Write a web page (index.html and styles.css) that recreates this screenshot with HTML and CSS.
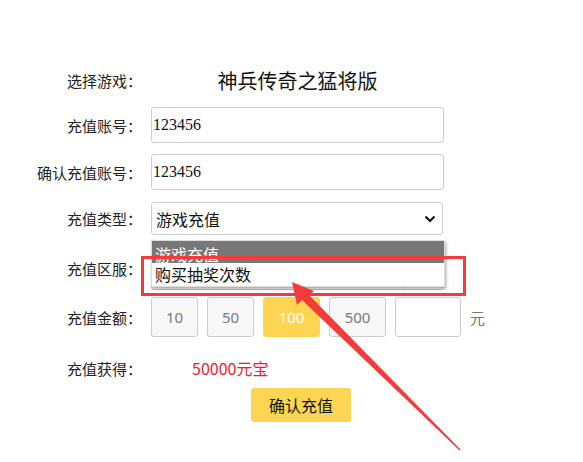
FILE: index.html
```html
<!DOCTYPE html>
<html lang="zh-CN">
<head>
  <meta charset="UTF-8" />
  <meta name="viewport" content="width=device-width, initial-scale=1" />
  <title>充值</title>
  <link rel="stylesheet" href="styles.css">
</head>
<body>
  <main class="pay">
    <div class="row row-game">
      <span class="label">选择游戏：</span>
      <span class="game-name">神兵传奇之猛将版</span>
    </div>
    <div class="row row-input">
      <span class="label">充值账号：</span>
      <input class="field" type="text" value="123456" />
    </div>
    <div class="row row-input gap-11">
      <span class="label">确认充值账号：</span>
      <input class="field" type="text" value="123456" />
    </div>
    <div class="row row-select">
      <span class="label">充值类型：</span>
      <div class="select">
        <span>游戏充值</span>
        <svg class="caret" width="12" height="8" viewBox="0 0 12 8"><path d="M1.5 1.5 L6 6 L10.5 1.5" fill="none" stroke="#111" stroke-width="2.2"/></svg>
      </div>
      <div class="options">
        <div class="option option-hover"><span>游戏充值</span></div>
        <div class="option">购买抽奖次数</div>
      </div>
    </div>
    <div class="row row-zone">
      <span class="label">充值区服：</span>
      <div class="zone">
        <div class="zone-main"></div>
        <div class="zone-side"></div>
      </div>
    </div>
    <div class="row row-amount">
      <span class="label">充值金额：</span>
      <div class="amounts">
        <button class="amount">10</button>
        <button class="amount">50</button>
        <button class="amount amount-wide active">100</button>
        <button class="amount amount-wide">500</button>
        <input class="amount-custom" type="text" />
        <span class="unit">元</span>
      </div>
    </div>
    <div class="row row-result">
      <span class="label">充值获得：</span>
      <span class="result">50000元宝</span>
    </div>
    <div class="row row-submit">
      <button class="submit">确认充值</button>
    </div>

    <div class="mark"></div>
    <svg class="arrow" width="583" height="462" viewBox="0 0 583 462">
      <polygon points="292,282 314,291 309,295 461,450 459,450 302,300 297,305" fill="#f23b3b"/>
    </svg>
  </main>
</body>
</html>
```

FILE: styles.css
```css
body {
  margin: 0;
  font-family: "Noto Sans CJK SC", "Noto Sans", sans-serif;
  color: #222;
  background: #fff;
}
.pay {
  position: relative;
  width: 583px;
  height: 462px;
  padding-top: 65px;
  box-sizing: border-box;
}
.row {
  display: flex;
  align-items: center;
  margin-top: 12px;
}
.label {
  width: 142px;
  padding-right: 9px;
  text-align: right;
  font-size: 15px;
  white-space: nowrap;
  flex-shrink: 0;
}
.row-game {
  height: 30px;
  margin-top: 0;
}
.game-name {
  width: 293px;
  text-align: center;
  font-size: 20px;
  color: #111;
}
.row-input {
  height: 36px;
}
.gap-11 {
  margin-top: 11px;
}
.field {
  width: 293px;
  height: 36px;
  box-sizing: border-box;
  border: 1px solid #ccc;
  border-radius: 3px;
  padding: 0 1px;
  font-family: "Liberation Serif", serif;
  font-size: 16px;
  color: #111;
}
.row-select {
  position: relative;
  height: 33px;
}
.select {
  width: 292px;
  height: 33px;
  box-sizing: border-box;
  border: 1px solid #ccc;
  border-radius: 3px;
  padding: 0 6px 0 4px;
  display: flex;
  align-items: center;
  justify-content: space-between;
  font-size: 16px;
  color: #111;
}
.options {
  position: absolute;
  left: 151px;
  top: 38px;
  width: 292px;
  background: #fff;
  border: 1px solid #ddd;
  box-shadow: 1px 2px 3px rgba(0,0,0,0.35);
  z-index: 2;
}
.option {
  height: 23px;
  line-height: 23px;
  padding-left: 3px;
  font-size: 16px;
  color: #111;
}
.option-hover {
  height: 22px;
  background: #777;
  color: #fff;
  overflow: hidden;
}
.option-hover span {
  display: block;
  line-height: 18px;
  margin-top: 4px;
}
.row-zone {
  height: 43px;
}
.zone {
  display: flex;
  width: 293px;
  height: 43px;
  box-sizing: border-box;
  border: 1px solid #ccc;
  border-radius: 3px;
}
.zone-main {
  width: 252px;
  border-right: 1px solid #ccc;
}
.row-amount {
  height: 40px;
  margin-top: 7px;
}
.amounts {
  display: flex;
  align-items: center;
  gap: 9px;
}
.amount {
  width: 47px;
  height: 40px;
  border: 1px solid #ccc;
  border-radius: 3px;
  background: #f8f8f8;
  color: #777;
  font-family: "Noto Sans", sans-serif;
  font-size: 15px;
  padding: 0;
}
.amount-wide {
  width: 57px;
}
.amount.active {
  background: #fed552;
  border-color: #fed552;
  color: #fff;
}
.amount-custom {
  width: 66px;
  height: 40px;
  box-sizing: border-box;
  border: 1px solid #ccc;
  border-radius: 3px;
}
.unit {
  font-size: 15px;
  color: #777;
}
.row-result {
  height: 30px;
  margin-top: 16px;
}
.result {
  margin-left: 41px;
  font-size: 16px;
  color: #f21a2e;
}
.row-submit {
  margin-top: 5px;
  padding-left: 251px;
}
.submit {
  width: 100px;
  height: 34px;
  border: none;
  border-radius: 3px;
  background: #fed552;
  font-family: "Noto Sans CJK SC", sans-serif;
  font-size: 16px;
  color: #111;
  padding: 0;
}
.mark {
  position: absolute;
  left: 141px;
  top: 256px;
  width: 325px;
  height: 40px;
  box-sizing: border-box;
  border: 3px solid #f43a3a;
  z-index: 3;
}
.arrow {
  position: absolute;
  left: 0;
  top: 0;
  z-index: 4;
}
```
